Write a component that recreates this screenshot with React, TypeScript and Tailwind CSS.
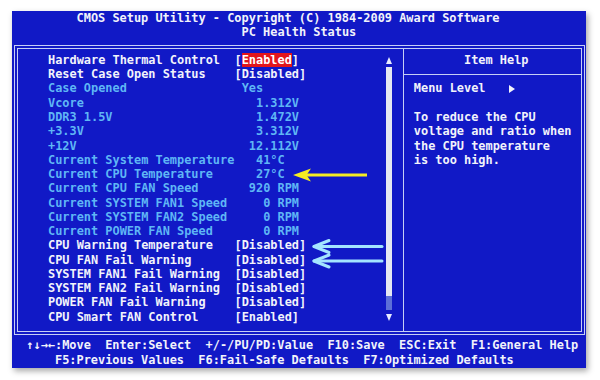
import type { ReactNode } from 'react'

type Row = {
  label: string
  value: ReactNode
  tone: 'white' | 'cyan'
}

const rows: Row[] = [
  {
    label: 'Hardware Thermal Control',
    value: (
      <>
        [<span className="bg-[#e2151c] text-white">Enabled</span>]
      </>
    ),
    tone: 'white',
  },
  { label: 'Reset Case Open Status', value: '[Disabled]', tone: 'white' },
  { label: 'Case Opened', value: ' Yes', tone: 'cyan' },
  { label: 'Vcore', value: '   1.312V', tone: 'cyan' },
  { label: 'DDR3 1.5V', value: '   1.472V', tone: 'cyan' },
  { label: '+3.3V', value: '   3.312V', tone: 'cyan' },
  { label: '+12V', value: '  12.112V', tone: 'cyan' },
  { label: 'Current System Temperature', value: '   41°C', tone: 'cyan' },
  { label: 'Current CPU Temperature', value: '   27°C', tone: 'cyan' },
  { label: 'Current CPU FAN Speed', value: '  920 RPM', tone: 'cyan' },
  { label: 'Current SYSTEM FAN1 Speed', value: '    0 RPM', tone: 'cyan' },
  { label: 'Current SYSTEM FAN2 Speed', value: '    0 RPM', tone: 'cyan' },
  { label: 'Current POWER FAN Speed', value: '    0 RPM', tone: 'cyan' },
  { label: 'CPU Warning Temperature', value: '[Disabled]', tone: 'white' },
  { label: 'CPU FAN Fail Warning', value: '[Disabled]', tone: 'white' },
  { label: 'SYSTEM FAN1 Fail Warning', value: '[Disabled]', tone: 'white' },
  { label: 'SYSTEM FAN2 Fail Warning', value: '[Disabled]', tone: 'white' },
  { label: 'POWER FAN Fail Warning', value: '[Disabled]', tone: 'white' },
  { label: 'CPU Smart FAN Control', value: '[Enabled]', tone: 'white' },
]

const helpLines = [
  'To reduce the CPU',
  'voltage and ratio when',
  'the CPU temperature',
  'is too high.',
]

function Triangle({ down = false }: { down?: boolean }) {
  return (
    <svg viewBox="0 0 6 7" className="h-[7px] w-[6px]" aria-hidden="true">
      <path d={down ? 'M0 0H6L3 7Z' : 'M3 0L6 7H0Z'} fill="#e8ecff" />
    </svg>
  )
}

function Arrows() {
  return (
    <svg
      className="pointer-events-none absolute inset-0 h-[357px] w-[574px]"
      viewBox="0 0 574 357"
      aria-hidden="true"
    >
      <path d="M292 164H355" stroke="#f5ec22" strokeWidth="3" />
      <path d="M281 164L299 157.5L294.5 164L299 170.5Z" fill="#f5ec22" />
      {[235.5, 250].map((y) => (
        <g key={y} stroke="#a4e4ff" strokeWidth="3" strokeLinecap="round" fill="none">
          <path d={`M302 ${y}H370`} />
          <path d={`M317 ${y - 6}L302 ${y}L317 ${y + 6}`} strokeLinejoin="round" />
        </g>
      ))}
    </svg>
  )
}

export default function App() {
  return (
    <div className="h-[380px] w-[600px] bg-white pl-[12px] pt-[12px]">
      <div
        className="relative h-[357px] w-[574px] bg-[#1119c6] text-[11.92px] font-bold leading-[14.28px] text-[#f2f3fb] shadow-[2px_3px_6px_rgba(0,0,0,0.35)]"
        style={{ fontFamily: '"DejaVu Sans Mono", "Liberation Mono", monospace' }}
      >
        <div className="-mt-[1px] mb-[1px] whitespace-pre">
          <div className="h-[14.28px] pl-[64.6px]">
            CMOS Setup Utility - Copyright (C) 1984-2009 Award Software
          </div>
          <div className="h-[14.28px] pl-[229.6px]">PC Health Status</div>
        </div>

        <div className="ml-[2px] mt-[5.4px] flex h-[290px] w-[571px] border-4 border-double border-[#c6cff5]">
          <div className="flex w-[384.5px] pt-[4px]">
            <div className="flex-1 pl-[30px]">
              {rows.map((row) => (
                <div
                  key={row.label}
                  className={`flex h-[14.28px] whitespace-pre ${
                    row.tone === 'cyan' ? 'text-[#5fb6f5]' : 'text-[#f2f3fb]'
                  }`}
                >
                  <span className="w-[186.5px] shrink-0">{row.label}</span>
                  <span>{row.value}</span>
                </div>
              ))}
            </div>
            <div className="flex w-[7.2px] flex-col items-center">
              <div className="flex h-[14.28px] items-center">
                <Triangle />
              </div>
              <div className="h-[228.5px] w-[6px] bg-[#e6e8f2]" />
              <div className="h-[14.28px] w-[6px] bg-[#5d6fd8]" />
              <div className="flex h-[14.28px] items-center">
                <Triangle down />
              </div>
            </div>
            <div className="w-[10.2px]" />
          </div>

          <div className="w-[1px] bg-[#c6cff5]" />

          <div className="flex flex-1 flex-col pt-[4px]">
            <div className="h-[14.28px] whitespace-pre pl-[60.5px]">Item Help</div>
            <div className="flex h-[14.28px] items-center">
              <div className="h-[1px] w-full bg-[#c6cff5]" />
            </div>
            <div className="flex h-[14.28px] items-center whitespace-pre pl-[10.3px]">
              <span>Menu Level</span>
              <span className="ml-[24px] flex items-center">
                <svg viewBox="0 0 6 8" className="h-[8px] w-[6px]" aria-hidden="true">
                  <path d="M0 0L6 4L0 8Z" fill="#f2f3fb" />
                </svg>
              </span>
            </div>
            <div className="h-[14.28px]" />
            {helpLines.map((line) => (
              <div key={line} className="h-[14.28px] whitespace-pre pl-[10.3px]">
                {line}
              </div>
            ))}
          </div>
        </div>

        <div className="mt-[3.5px] whitespace-pre">
          <div className="h-[14.28px] pl-[14.35px]">
            ↑↓→←:Move  Enter:Select  +/-/PU/PD:Value  F10:Save  ESC:Exit  F1:General Help
          </div>
          <div className="h-[14.28px] pl-[43px]">
            F5:Previous Values  F6:Fail-Safe Defaults  F7:Optimized Defaults
          </div>
        </div>

        <Arrows />
      </div>
    </div>
  )
}
